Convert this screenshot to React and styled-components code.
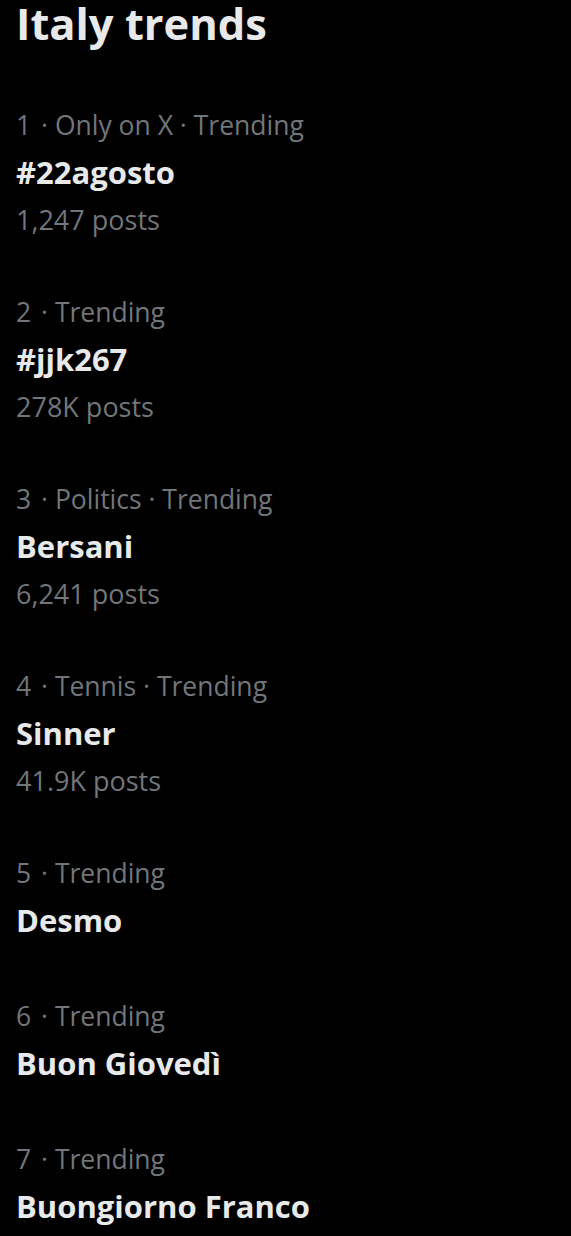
import React from "react";
import styled, { createGlobalStyle } from "styled-components";

const GlobalStyle = createGlobalStyle`
    html, body {
        margin:0;
        padding:0;
        background:#000;
    }
    body {
        font-family: "Open Sans", "Noto Sans", "Liberation Sans", sans-serif;
        -webkit-font-smoothing: antialiased;
    }
`;

const Page = styled.div`
    width:571px;
    min-height:1236px;
    background:#000;
    padding:0 16px;
    box-sizing:border-box;
`;
const Heading = styled.h1`
    margin:0;
    color:#e7e9ea;
    font-size:43.5px;
    font-weight:700;
    line-height:48px;
`;
const List = styled.div`
    display:flex;
    flex-direction:column;
    margin-top:54px;
`;
const Trend = styled.div`
    display:flex;
    flex-direction:column;
    padding-bottom:${props => (props.$hasPosts ? "45px" : "49px")};
`;
const Meta = styled.div`
    color:#71767b;
    font-size:26.5px;
    line-height:47px;
    white-space:pre;
`;
const Rank = styled.span`
    padding-right:3px;
`;
const Name = styled.div`
    color:#e7e9ea;
    font-size:31px;
    font-weight:700;
    line-height:47px;
`;
const Posts = styled.div`
    color:#71767b;
    font-size:27px;
    line-height:48px;
`;

const trends = [
    { rank: 1, tags: ["Only on X", "Trending"], name: "#22agosto", posts: "1,247 posts" },
    { rank: 2, tags: ["Trending"], name: "#jjk267", posts: "278K posts" },
    { rank: 3, tags: ["Politics", "Trending"], name: "Bersani", posts: "6,241 posts" },
    { rank: 4, tags: ["Tennis", "Trending"], name: "Sinner", posts: "41.9K posts" },
    { rank: 5, tags: ["Trending"], name: "Desmo" },
    { rank: 6, tags: ["Trending"], name: "Buon Giovedì" },
    { rank: 7, tags: ["Trending"], name: "Buongiorno Franco" },
];

function App() {
    return (
        <Page>
            <GlobalStyle />
            <Heading>Italy trends</Heading>
            <List>
                {trends.map(t => (
                    <Trend key={t.name} $hasPosts={!!t.posts}>
                        <Meta>
                            <Rank>{t.rank}</Rank>{" · " + t.tags.join(" · ")}
                        </Meta>
                        <Name>{t.name}</Name>
                        {t.posts && <Posts>{t.posts}</Posts>}
                    </Trend>
                ))}
            </List>
        </Page>
    );
}

export default App;
